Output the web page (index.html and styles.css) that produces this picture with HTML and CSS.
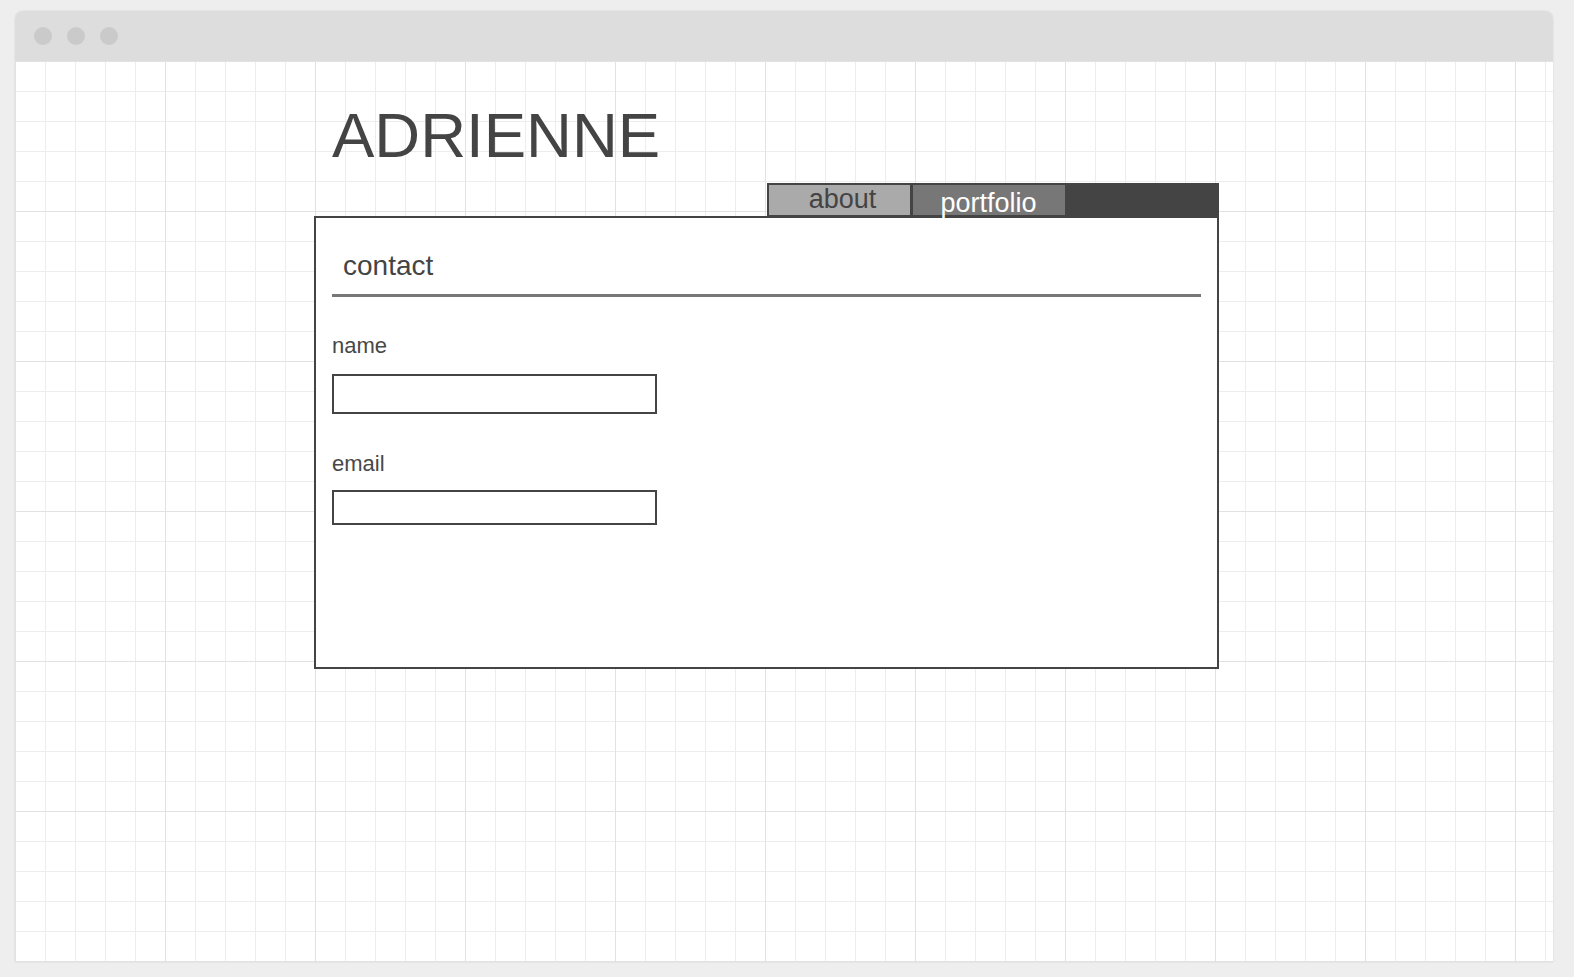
FILE: index.html
```html
<!DOCTYPE html>
<html lang="en">
<head>
    <meta charset="UTF-8">
    <meta name="viewport" content="width=device-width, initial-scale=1.0">
    <title>Adrienne - contact</title>
    <link rel="stylesheet" href="styles.css">
</head>
<body>
    <div class="window">
        <div class="window-bar">
            <span class="dot"></span>
            <span class="dot"></span>
            <span class="dot"></span>
        </div>

        <div class="canvas">
            <div class="page">
                <h1 class="site-title">ADRIENNE</h1>

                <nav class="tabs">
                    <a href="#about" class="tab tab-about">about</a>
                    <a href="#portfolio" class="tab tab-portfolio">portfolio</a>
                </nav>

                <div class="panel">
                    <h2 class="panel-title">contact</h2>

                    <form class="contact-form">
                        <label for="name" class="field-label">name</label>
                        <input type="text" id="name" class="field field-name">

                        <label for="email" class="field-label field-label-email">email</label>
                        <input type="email" id="email" class="field field-email">
                    </form>
                </div>
            </div>
        </div>
    </div>
</body>
</html>
```

FILE: styles.css
```css
/* base */
* {
    box-sizing: border-box;
    margin: 0;
    padding: 0;
}

body {
    background-color: #eee;
    color: #444;
    font-family: 'Liberation Sans', Arial, Helvetica, sans-serif;
    padding: 11px 21px 15px 15px;
}

/* browser frame */
.window {
    height: 951px;
    display: flex;
    flex-direction: column;
    border-radius: 8px 8px 0 0;
    box-shadow: 0 0 2px rgba(0, 0, 0, 0.12);
    overflow: hidden;
}

.window-bar {
    height: 50px;
    flex: none;
    background-color: #ddd;
    display: flex;
    align-items: center;
    gap: 15px;
    padding-left: 19px;
}

.dot {
    width: 18px;
    height: 18px;
    border-radius: 50%;
    background-color: #cacaca;
}

/* grid paper */
.canvas {
    flex: 1;
    background-color: #fff;
    background-image:
        linear-gradient(to right, #e2e2e2 1px, transparent 1px),
        linear-gradient(to bottom, #e2e2e2 1px, transparent 1px),
        linear-gradient(to right, #ededed 1px, transparent 1px),
        linear-gradient(to bottom, #ededed 1px, transparent 1px);
    background-size: 150px 150px, 150px 150px, 30px 30px, 30px 30px;
    padding: 42px 0 0 299px;
}

.page {
    width: 905px;
}

.site-title {
    font-size: 63.5px;
    font-weight: normal;
    line-height: 64px;
    padding-left: 18px;
    margin-bottom: 16px;
    color: #444;
}

/* tabs */
.tabs {
    width: 50%;
    margin-left: auto;
    height: 33px;
    background-color: #444;
    display: flex;
    align-items: flex-start;
    gap: 3px;
    padding: 2px 0 0 2px;
}

.tab {
    height: 30px;
    font-size: 27px;
    text-align: center;
    text-decoration: none;
    white-space: nowrap;
}

.tab-about {
    width: 141px;
    padding-left: 7px;
    line-height: 29px;
    background-color: #aaa;
    color: #444;
}

.tab-portfolio {
    width: 152px;
    line-height: 36px;
    background-color: #777;
    color: #fff;
}

/* panel */
.panel {
    height: 453px;
    background-color: #fff;
    border: 2px solid #444;
    padding: 16px;
}

.panel-title {
    font-size: 28px;
    font-weight: normal;
    line-height: 32px;
    padding: 16px 11px 12px;
    border-bottom: 3px solid #777;
}

.contact-form {
    display: flex;
    flex-direction: column;
    align-items: flex-start;
}

.field-label {
    font-size: 22px;
    line-height: 25px;
    margin-top: 36px;
    color: #484848;
}

.field-label-email {
    margin-top: 37px;
}

.field {
    width: 325px;
    border: 2px solid #444;
    background: #fff;
    outline: none;
    font-family: inherit;
}

.field-name {
    height: 40px;
    margin-top: 16px;
}

.field-email {
    height: 35px;
    margin-top: 14px;
}
```
